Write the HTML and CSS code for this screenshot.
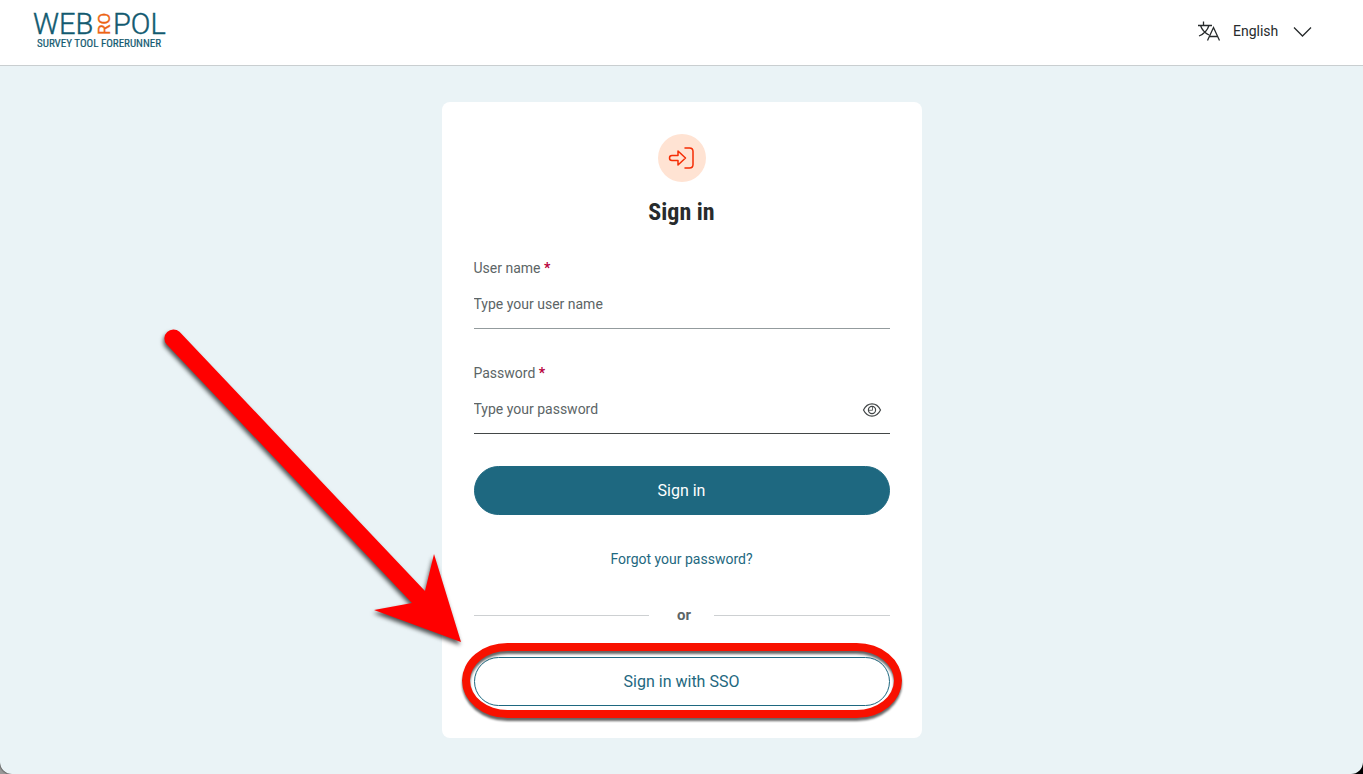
FILE: index.html
```html
<!DOCTYPE html>
<html lang="en">
<head>
<meta charset="utf-8">
<meta name="viewport" content="width=device-width, initial-scale=1">
<title>Webropol - Sign in</title>
<link rel="stylesheet" href="styles.css">
</head>
<body>
<div class="window">
  <header class="topbar">
    <a class="logo" href="#" aria-label="Webropol, survey tool forerunner">
      <svg width="136" height="46" viewBox="0 0 136 46">
        <text class="logo-name" x="1" y="26">WEB</text>
        <text class="logo-accent" transform="translate(78 27) rotate(-90)">RO</text>
        <text class="logo-name" x="81" y="26">POL</text>
        <text class="logo-tagline" x="5" y="39">SURVEY TOOL FORERUNNER</text>
      </svg>
    </a>
    <label class="language">
      <svg class="language-icon" width="24" height="24" viewBox="0 0 24 24" aria-hidden="true">
        <path d="M1 6.500H15M6.500 2.500V6.500M3.500 6.500C5 11 8 14 12 16M12 6.500C10.500 11 7 15 2 17M10.500 21.500 16.500 8.500 22.500 21.500M12.500 17.500H20.500"/>
      </svg>
      <select class="language-select" aria-label="Language"><option>English</option></select>
      <svg class="language-chevron" width="20" height="12" viewBox="0 0 20 12" aria-hidden="true"><path d="M1 2.500 9.500 11 18 2.500"/></svg>
    </label>
  </header>
  <main class="page">
    <form class="card">
      <div class="badge">
        <svg width="48" height="48" viewBox="0 0 48 48" aria-hidden="true">
          <path d="M14 21.500H20V17L27.500 24 20 31V26.500H14A2.500 2.500 0 0 1 14 21.500ZM27 14H31.500Q35 14 35 17.500V30.500Q35 34 31.500 34H27"/>
        </svg>
      </div>
      <h1 class="title">Sign in</h1>
      <div class="field">
        <label class="label" for="username">User name <span class="required">*</span></label>
        <div class="control"><input class="input" id="username" type="text" placeholder="Type your user name"></div>
      </div>
      <div class="field">
        <label class="label" for="password">Password <span class="required">*</span></label>
        <div class="control control-strong">
          <input class="input" id="password" type="password" placeholder="Type your password">
          <button class="reveal" type="button" aria-label="Show password">
            <svg width="20" height="18" viewBox="0 0 20 18" aria-hidden="true">
              <path d="M1.500 10C5.500 1.800 14.500 1.800 18.500 10C14.500 18.200 5.500 18.200 1.500 10Z"/>
              <circle cx="10" cy="10" r="3.600"/>
              <path class="reveal-glint" d="M10.500 6.500V10.300H6.500"/>
            </svg>
          </button>
        </div>
      </div>
      <button class="button button-primary" type="submit">Sign in</button>
      <a class="forgot" href="#">Forgot your password?</a>
      <div class="divider"><span class="divider-text">or</span></div>
      <div class="sso">
        <button class="button button-outline" type="button">Sign in with SSO</button>
        <span class="ring" aria-hidden="true"></span>
        <svg class="arrow" width="310" height="330" viewBox="0 0 310 330" aria-hidden="true">
          <path d="M29.500 17.800A9 9 0 0 0 16.500 30.200L262 289 224 296 311 328 284 240 275 277Z"/>
        </svg>
      </div>
    </form>
  </main>
</div>
</body>
</html>
```
FILE: styles.css
```css
* {
  box-sizing: border-box;
}

body {
  margin: 0;
  background: linear-gradient(90deg, #999 50%, #000 50%);
  color: #272b2c;
  font-family: Roboto, "Liberation Sans", sans-serif;
  font-size: 14px;
  line-height: 20px;
}

.window {
  display: flex;
  flex-direction: column;
  min-height: 100vh;
  overflow: hidden;
  background: #eaf3f6;
  border-radius: 0 0 12px 12px;
  box-shadow: 0 0 2px #000;
}

.topbar {
  display: flex;
  align-items: center;
  justify-content: space-between;
  height: 66px;
  padding: 0 50px 3px 32px;
  background: #fff;
  border-bottom: 1px solid #c9ced0;
}

.logo,
.logo svg {
  display: block;
}

.logo-name {
  fill: #125a70;
  stroke: #125a70;
  stroke-width: 0.4;
  font-size: 29px;
  font-weight: 300;
}

.logo-accent {
  fill: #ec6414;
  stroke: #ec6414;
  stroke-width: 0.3;
  font-size: 17px;
}

.logo-tagline {
  fill: #125a70;
  stroke: #125a70;
  stroke-width: 0.2;
  font-family: "Roboto Condensed", "Liberation Sans Narrow", Roboto, sans-serif;
  font-size: 11px;
}

.language {
  display: flex;
  align-items: center;
}

.language svg {
  fill: none;
  stroke: #272b2c;
  stroke-width: 1.3;
}

.language-select {
  width: 60px;
  margin-left: 12px;
  padding: 0;
  appearance: none;
  background: none;
  border: 0;
  color: inherit;
  font: inherit;
}

.page {
  display: flex;
  flex: 1;
  justify-content: center;
  align-items: flex-start;
  padding: 36px 16px;
}

.card {
  display: flex;
  flex-direction: column;
  width: 100%;
  max-width: 480px;
  padding: 32px;
  background: #fff;
  border-radius: 8px;
}

.badge {
  align-self: center;
  width: 48px;
  height: 48px;
  background: #ffe3d3;
  border-radius: 50%;
}

.badge svg {
  display: block;
  fill: none;
  stroke: #f52d05;
  stroke-width: 1.5;
  stroke-linejoin: round;
  stroke-linecap: round;
}

.title {
  margin: 14px 0 30px;
  font-family: "Roboto Condensed", "Liberation Sans Narrow", Roboto, sans-serif;
  font-size: 24px;
  line-height: 32px;
  font-weight: 700;
  text-align: center;
}

.field {
  margin-bottom: 34px;
}

.label {
  display: block;
  color: #5c6566;
}

.required {
  color: #b8003c;
  font-weight: 700;
}

.control {
  display: flex;
  align-items: center;
  height: 51px;
  padding-top: 2px;
  border-bottom: 1px solid #939b9d;
}

.control-strong {
  border-color: #434748;
}

.input {
  flex: 1;
  min-width: 0;
  height: 48px;
  padding: 0;
  border: 0;
  outline: 0;
  background: none;
  color: inherit;
  font: inherit;
}

.input::placeholder {
  color: #5c6566;
  opacity: 1;
}

.reveal {
  margin-right: 8px;
  padding: 0;
  background: none;
  border: 0;
}

.reveal svg {
  display: block;
  fill: none;
  stroke: #434748;
  stroke-width: 1.2;
}

.reveal .reveal-glint {
  stroke-width: 0.8;
}

.button {
  width: 100%;
  height: 49px;
  border: 1px solid #1e6880;
  border-radius: 25px;
  font: inherit;
  font-size: 16px;
}

.button-primary {
  margin-top: -2px;
  background: #1e6880;
  color: #fff;
}

.button-outline {
  background: #fff;
  color: #1e6880;
}

.forgot {
  align-self: center;
  margin: 34px 0 36px;
  color: #1e6880;
  text-decoration: none;
}

.divider {
  display: flex;
  align-items: center;
  margin-bottom: 32px;
  color: #5c6566;
  font-size: 15px;
  font-weight: 700;
}

.divider-text {
  padding: 0 23px 0 28px;
}

.divider::before,
.divider::after {
  content: "";
  flex: 1;
  height: 1px;
  background: #cdd0d2;
}

.sso {
  position: relative;
}

.ring {
  position: absolute;
  inset: -14px -12px -12px;
  border: 8px solid #f81100;
  border-radius: 46px / 38px;
  filter: drop-shadow(0 3px 1px #0009);
  pointer-events: none;
}

.arrow {
  position: absolute;
  right: 430px;
  bottom: 62px;
  overflow: visible;
  filter: drop-shadow(-1px 3px 2px #000a);
  pointer-events: none;
}

.arrow path {
  fill: #f00;
}
```
